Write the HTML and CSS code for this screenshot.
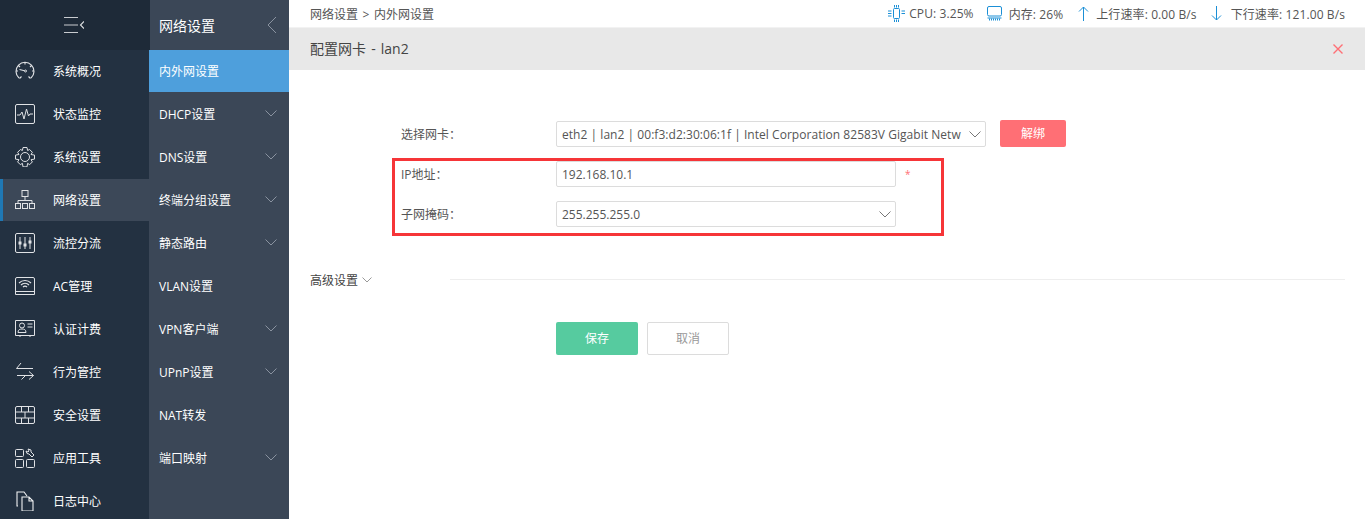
FILE: index.html
```html
<!DOCTYPE html>
<html lang="zh">
<head>
<meta charset="utf-8">
<title>配置网卡</title>
<link rel="stylesheet" href="styles.css">
</head>
<body>
<div class="app">
  <nav class="rail">
    <div class="rail-top">
      <svg class="ic-menu" width="20" height="16" viewBox="0 0 20 16"><path d="M0 .5h14M0 8h14M0 15.500h14" stroke="#c9ccd0" stroke-width="1.200"/><path d="M20 4.500L16.500 8l3.500 3.500" stroke="#e0e2e4" fill="none" stroke-width="1.100"/></svg>
    </div>
    <a class="rail-item"><svg class="ic" viewBox="0 0 20 20"><path d="M4 17A9 9 0 1 1 16 17M13.500 15.500l2 2M6.500 15.500l-2 2M10 1v2.500M1 10h2M19 10h-2M3.500 4.500l1.500 1.500M16.500 4.500L15 6M4.500 8.500l5 1.200" fill="none" stroke="#e0e2e5" stroke-width="1.100"/><circle cx="10.500" cy="10" r="1" fill="none" stroke="#e0e2e5"/></svg><span>系统概况</span></a>
    <a class="rail-item"><svg class="ic" viewBox="0 0 20 20"><rect x=".5" y=".5" width="19" height="19" rx="1.500" fill="none" stroke="#e0e2e5"/><path d="M2 11h3l2-3 2 7 2.500-10 2 7 1.500-2h3" fill="none" stroke="#e0e2e5"/></svg><span>状态监控</span></a>
    <a class="rail-item"><svg class="ic" viewBox="0 0 20 20"><path d="M8 .500h4l.6 3 2-1 2.800 2.800-1.400 2.200 3.500.6v4l-3.500.6 1.400 2.200-2.800 2.800-2-1.400-.6 3.600H8l-.6-3.600-2 1.400-2.800-2.800L4 12.700l-3.500-.6v-4l3.500-.6-1.400-2.200 2.800-2.800 2 1z" fill="none" stroke="#e0e2e5"/><circle cx="10" cy="10" r="4.500" fill="none" stroke="#e0e2e5"/></svg><span>系统设置</span></a>
    <a class="rail-item active"><svg class="ic" viewBox="0 0 20 20"><rect x="7" y=".5" width="6" height="6" fill="none" stroke="#e0e2e5"/><path d="M10 6.500v4M3 13.500v-3h14v3" fill="none" stroke="#e0e2e5"/><rect x=".5" y="13.500" width="5" height="5" fill="none" stroke="#e0e2e5"/><rect x="7.500" y="13.500" width="5" height="5" fill="none" stroke="#e0e2e5"/><rect x="14.500" y="13.500" width="5" height="5" fill="none" stroke="#e0e2e5"/></svg><span>网络设置</span></a>
    <a class="rail-item"><svg class="ic" viewBox="0 0 20 20"><rect x=".5" y=".5" width="19" height="19" rx="1.500" fill="none" stroke="#e0e2e5"/><path d="M5 4v12M10 4v12M15 4v12" stroke="#e0e2e5"/><path d="M3.500 10h3M8.500 12h3M13.500 9h3" stroke="#e0e2e5" stroke-width="3"/></svg><span>流控分流</span></a>
    <a class="rail-item"><svg class="ic" viewBox="0 0 20 20"><path d="M2 1.500h16a1.500 1.500 0 0 1 1.500 1.500v15.500H.5V3A1.500 1.500 0 0 1 2 1.500zM.5 15.500h19" fill="none" stroke="#e0e2e5"/><path d="M4 7a8.500 8.500 0 0 1 12 0M6 9a5.500 5.500 0 0 1 8 0M8 11a3 3 0 0 1 4 0" fill="none" stroke="#e0e2e5" stroke-width="1.200"/></svg><span>AC管理</span></a>
    <a class="rail-item"><svg class="ic" viewBox="0 0 20 20"><path d="M.5 1.500h19v15h-19zM5 16v2M15 16v2" fill="none" stroke="#e0e2e5"/><circle cx="7" cy="6.500" r="2.500" fill="none" stroke="#e0e2e5"/><path d="M3 13.500c0-3 2-3.500 4-3.500s4 .5 4 3.500zM12.500 5h5M12.500 8h5" fill="none" stroke="#e0e2e5"/></svg><span>认证计费</span></a>
    <a class="rail-item"><svg class="ic" viewBox="0 0 20 20"><path d="M6 1L1.500 6.500H18M2 13.500h16.500M14 9.500l4.500 4-4.500 4M10 14l-3.500 3.500" fill="none" stroke="#e0e2e5"/></svg><span>行为管控</span></a>
    <a class="rail-item"><svg class="ic" viewBox="0 0 20 20"><rect x=".5" y="1.500" width="19" height="17" rx="1.500" fill="none" stroke="#e0e2e5"/><path d="M.5 7h19M.5 13h19M6.500 1.500V7M13.500 1.500V7M10 7v6M6.500 13v5.500M13.500 13v5.500" stroke="#e0e2e5"/></svg><span>安全设置</span></a>
    <a class="rail-item"><svg class="ic" viewBox="0 0 20 20"><rect x=".5" y="1.500" width="8" height="7" rx="1" fill="none" stroke="#e0e2e5"/><rect x=".5" y="11.500" width="8" height="8" rx="1" fill="none" stroke="#e0e2e5"/><rect x="11.500" y="11.500" width="8" height="8" rx="1" fill="none" stroke="#e0e2e5"/><path d="M13 1l3 1 0 2 3 3-2 2-3-3-2-.5-1-2.500 2 1 1-1z" fill="none" stroke="#e0e2e5"/></svg><span>应用工具</span></a>
    <a class="rail-item"><svg class="ic" viewBox="0 0 20 20"><path d="M3 15H2V1h7l3 4M7 6h7l4 4v10H7zM14 6v4h4" fill="none" stroke="#f0f1f2" stroke-width="1.100"/></svg><span>日志中心</span></a>
  </nav>

  <nav class="sub">
    <div class="sub-title"><span>网络设置</span><svg width="10" height="18" viewBox="0 0 10 18"><path d="M9 1L1 9l8 8" fill="none" stroke="#8a93a0"/></svg></div>
    <a class="sub-item active">内外网设置</a>
    <a class="sub-item"><span>DHCP设置</span><svg class="chev" viewBox="0 0 12 7"><path d="M.5.500L6 6 11.500.500" fill="none" stroke="#8a93a0"/></svg></a>
    <a class="sub-item"><span>DNS设置</span><svg class="chev" viewBox="0 0 12 7"><path d="M.5.500L6 6 11.500.500" fill="none" stroke="#8a93a0"/></svg></a>
    <a class="sub-item"><span>终端分组设置</span><svg class="chev" viewBox="0 0 12 7"><path d="M.5.500L6 6 11.500.500" fill="none" stroke="#8a93a0"/></svg></a>
    <a class="sub-item"><span>静态路由</span><svg class="chev" viewBox="0 0 12 7"><path d="M.5.500L6 6 11.500.500" fill="none" stroke="#8a93a0"/></svg></a>
    <a class="sub-item">VLAN设置</a>
    <a class="sub-item"><span>VPN客户端</span><svg class="chev" viewBox="0 0 12 7"><path d="M.5.500L6 6 11.500.500" fill="none" stroke="#8a93a0"/></svg></a>
    <a class="sub-item"><span>UPnP设置</span><svg class="chev" viewBox="0 0 12 7"><path d="M.5.500L6 6 11.500.500" fill="none" stroke="#8a93a0"/></svg></a>
    <a class="sub-item">NAT转发</a>
    <a class="sub-item"><span>端口映射</span><svg class="chev" viewBox="0 0 12 7"><path d="M.5.500L6 6 11.500.500" fill="none" stroke="#8a93a0"/></svg></a>
  </nav>

  <main class="main">
    <header class="topbar">
      <div class="crumb">网络设置 &gt; 内外网设置</div>
      <div class="stats">
        <span class="stat"><svg width="17" height="17" viewBox="0 0 17 17"><rect x="5.500" y="3.500" width="6" height="10" rx="1" fill="none" stroke="#1b8fd6"/><path d="M0 6h3.500M0 8.500h3.500M0 11h3.500M13.500 6H17M13.500 8.500H17M6.500 0v2.500M8.500 0v2.500M10.500 0v2.500M6.500 14.500V17M8.500 14.500V17M10.500 14.500V17" stroke="#1b8fd6"/></svg>CPU: 3.25%</span>
        <span class="stat"><svg width="15" height="15" viewBox="0 0 15 15"><rect x=".5" y=".5" width="14" height="9.500" rx="1.500" fill="none" stroke="#1b8fd6"/><path d="M.5 12h14" stroke="#1b8fd6"/><path d="M2 13.500h11" stroke="#1b8fd6" stroke-width="2" stroke-dasharray="1 1"/></svg><span class="gap">内存: 26%</span></span>
        <span class="stat stat-up"><svg width="11" height="15" viewBox="0 0 11 15"><path d="M5.500 15V1M1 5.500L5.500 1 10 5.500" fill="none" stroke="#1b8fd6"/></svg><span class="gap">上行速率: 0.00 B/s</span></span>
        <span class="stat stat-down"><svg width="11" height="15" viewBox="0 0 11 15"><path d="M5.500 0v14M1 9.500L5.500 14 10 9.500" fill="none" stroke="#1b8fd6"/></svg><span class="gap">下行速率: 121.00 B/s</span></span>
      </div>
    </header>
    <div class="panel-head">
      <h1>配置网卡 - lan2</h1>
      <svg width="10" height="10" viewBox="0 0 10 10"><path d="M.5.500l9 9M9.500.500l-9 9" stroke="#ff6f75" stroke-width="1.400"/></svg>
    </div>
    <form class="form">
      <div class="highlight"></div>
      <div class="row row-nic">
        <label>选择网卡<span class="colon">：</span></label>
        <div class="field select wide"><span class="clip">eth2 | lan2 | 00:f3:d2:30:06:1f | Intel Corporation 82583V Gigabit Netw</span><svg class="chev" viewBox="0 0 12 7"><path d="M.5.500L6 6 11.500.500" fill="none" stroke="#777"/></svg></div>
        <button type="button" class="btn btn-red">解绑</button>
      </div>
      <div class="row row-ip">
        <label>IP地址<span class="colon">：</span></label>
        <div class="field narrow">192.168.10.1</div>
        <span class="req">*</span>
      </div>
      <div class="row row-mask">
        <label>子网掩码<span class="colon">：</span></label>
        <div class="field select narrow"><span>255.255.255.0</span><svg class="chev" viewBox="0 0 12 7"><path d="M.5.500L6 6 11.500.500" fill="none" stroke="#777"/></svg></div>
      </div>
      <div class="advanced">
        <div class="adv-label">高级设置<svg class="chev-sm" viewBox="0 0 10 6"><path d="M.5.500L5 5 9.500.500" fill="none" stroke="#999"/></svg></div>
        <div class="adv-line"></div>
      </div>
      <div class="actions">
        <button type="button" class="btn btn-green">保存</button>
        <button type="button" class="btn btn-plain">取消</button>
      </div>
    </form>
  </main>
</div>
</body>
</html>
```
FILE: styles.css
```css
* { box-sizing: border-box; }
html, body { margin: 0; height: 100%; overflow: hidden; }
body {
  font-family: "Open Sans", "Noto Sans CJK SC", sans-serif;
  font-size: 12px;
  color: #555;
  background: #fff;
}
.app { display: flex; height: 519px; }

.rail { width: 150px; flex: none; background: #233141; color: #fff; overflow: hidden; position: relative; box-shadow: inset -1px 0 0 #3b4757; }
.rail::after { content: ""; position: absolute; right: 0; top: 50px; width: 1px; height: 42px; background: #4e9fdc; }
.rail-top { height: 50px; background: #1e2a38; display: flex; align-items: center; justify-content: center; padding-right: 2px; }
.rail-item { display: flex; align-items: center; height: 43px; padding: 0 0 2px 15px; gap: 18px; }
.rail-item.active { background: #3c4858; box-shadow: inset 3px 0 0 #1f78b4; height: 42px; margin-bottom: 1px; padding-bottom: 1px; }
.ic { width: 20px; height: 20px; flex: none; }

.sub { width: 139px; flex: none; background: #3b4757; color: #fff; }
.sub-title { height: 50px; display: flex; align-items: center; justify-content: space-between; padding: 0 12px 1px 9px; font-size: 14px; }
.sub-item { height: 43px; display: flex; align-items: center; justify-content: space-between; padding: 0 12px 2px 9px; }
.sub-item.active { background: #4e9fdc; height: 42px; margin-bottom: 1px; padding-bottom: 1px; }
.chev { width: 12px; height: 7px; flex: none; }

.main { flex: 1; min-width: 0; }
.topbar { height: 28px; display: flex; justify-content: space-between; align-items: center; padding: 0 20px 0 21px; border-bottom: 1px solid #f2f2f2; }
.crumb { word-spacing: 1.500px; }
.stats { display: flex; gap: 13px; letter-spacing: .1px; }
.stat { display: flex; align-items: center; gap: 4px; }
.stat-up { margin-left: 2px; }
.stat-down { margin-left: 1px; }
.stat .gap { margin-left: 3px; }
.stat-down .gap { margin-left: 5px; }
.panel-head { height: 42px; background: #e8e8e8; display: flex; align-items: center; justify-content: space-between; padding: 0 22px 0 21px; }
.panel-head h1 { margin: 0 0 3px; font-size: 14px; font-weight: 400; color: #444; word-spacing: 1.500px; }

.form { position: relative; display: flex; flex-direction: column; padding-top: 51px; }
.highlight { position: absolute; left: 103px; top: 88px; width: 552px; height: 78px; border: 3px solid #f63538; }
.row { display: flex; align-items: center; height: 26px; padding-left: 112px; }
.row label { width: 155px; flex: none; padding-bottom: 1px; }
.colon { font-family: "Noto Sans CJK TC", sans-serif; }
.row-ip, .row-mask { margin-top: 14px; }
.field { height: 26px; border: 1px solid #dcdcdc; border-radius: 2px; display: flex; align-items: center; justify-content: space-between; padding: 0 9px 0 5px; background: #fff; color: #555; flex: none; }
.select { padding-right: 4px; }
.wide { width: 430px; }
.narrow { width: 340px; }
.clip { white-space: nowrap; overflow: hidden; width: 402px; letter-spacing: .04px; }
.req { color: #ff6f75; margin-left: 9px; font-size: 10px; }
.btn { font: inherit; border-radius: 2px; height: 27px; border: 0; flex: none; padding: 0 0 2px; }
.btn-red { width: 66px; margin-left: 14px; background: #ff6f75; color: #fff; align-self: flex-end; }

.advanced { display: flex; align-items: center; margin-top: 43px; padding: 0 20px 0 21px; height: 20px; }
.adv-label { width: 140px; flex: none; display: flex; align-items: center; gap: 4px; color: #444; }
.chev-sm { width: 10px; height: 6px; }
.adv-line { flex: 1; height: 1px; background: #eee; margin-bottom: 2px; }

.actions { display: flex; gap: 9px; padding-left: 267px; margin-top: 32px; }
.btn-green { width: 82px; height: 33px; background: #56cb9f; color: #fff; }
.btn-plain { width: 82px; height: 33px; background: #fff; border: 1px solid #dcdcdc; color: #999; }
```
